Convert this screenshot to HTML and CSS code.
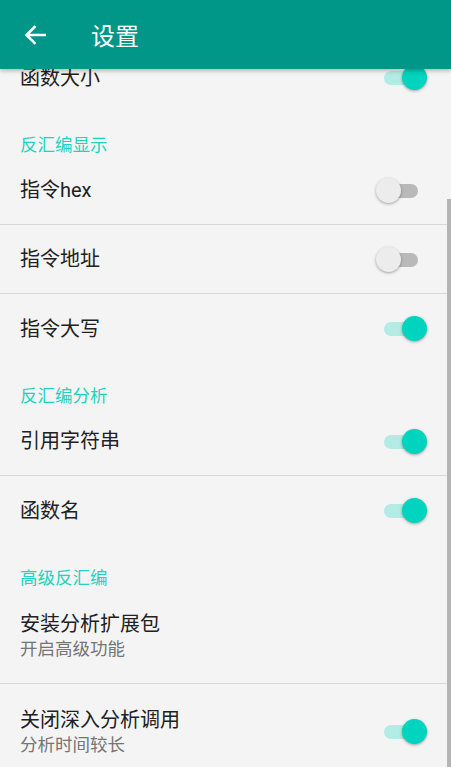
FILE: index.html
```html
<!DOCTYPE html>
<html lang="zh-CN">
<head>
    <meta charset="UTF-8">
    <meta name="viewport" content="width=device-width, initial-scale=1.0">
    <title>设置</title>
    <link rel="stylesheet" href="styles.css">
</head>
<body>

<div class="toolbar">
    <svg class="back" width="22" height="20" viewBox="0 0 22 20">
        <path d="M21 10H3M10.5 2L2.5 10l8 8" fill="none" stroke="#fff" stroke-width="2.6" stroke-linecap="square"/>
    </svg>
    <span class="title">设置</span>
</div>

<div class="list">
    <div class="pref">
        <span class="pref-title">函数大小</span>
        <span class="switch on"></span>
    </div>

    <div class="category">反汇编显示</div>
    <div class="pref divided">
        <span class="pref-title">指令hex</span>
        <span class="switch"></span>
    </div>
    <div class="pref divided">
        <span class="pref-title">指令地址</span>
        <span class="switch"></span>
    </div>
    <div class="pref">
        <span class="pref-title">指令大写</span>
        <span class="switch on"></span>
    </div>

    <div class="category">反汇编分析</div>
    <div class="pref divided">
        <span class="pref-title">引用字符串</span>
        <span class="switch on"></span>
    </div>
    <div class="pref">
        <span class="pref-title">函数名</span>
        <span class="switch on"></span>
    </div>

    <div class="category">高级反汇编</div>
    <div class="pref tall divided">
        <div class="pref-text">
            <span class="pref-title">安装分析扩展包</span>
            <span class="pref-summary">开启高级功能</span>
        </div>
    </div>
    <div class="pref tall">
        <div class="pref-text">
            <span class="pref-title">关闭深入分析调用</span>
            <span class="pref-summary">分析时间较长</span>
        </div>
        <span class="switch on"></span>
    </div>
</div>

<div class="scrollbar"></div>

</body>
</html>
```

FILE: styles.css
```css
* {
    box-sizing: border-box;
    margin: 0;
    padding: 0;
}

body {
    font-family: Roboto, 'Noto Sans CJK SC', sans-serif;
    background: #f4f4f4;
    color: #212121;
    height: 100vh;
    overflow: hidden; /* screenshot of a scrolled list */
}

.toolbar {
    position: relative;
    z-index: 2;
    display: flex;
    align-items: center;
    height: 69px;
    padding-left: 24px;
    background: #009688;
    box-shadow: 0 2px 4px rgba(0, 0, 0, 0.25);
}

.back {
    display: block;
    margin-top: 1px;
}

.title {
    margin-left: 45px;
    font-size: 24px;
    color: #fff;
}

/* list is scrolled a bit, first row sits under the toolbar */
.list {
    margin-top: -26px;
}

.pref {
    display: flex;
    align-items: center;
    justify-content: space-between;
    height: 69px;
    padding: 0 24px 0 20px;
}

.pref.tall {
    height: 95px;
}

.pref.divided {
    border-bottom: 1px solid #d8d8d8;
}

.pref-title {
    font-size: 20px;
    line-height: 26px;
}

.pref-text {
    display: flex;
    flex-direction: column;
}

.pref-summary {
    font-size: 17.5px;
    line-height: 24px;
    color: #757575;
}

.category {
    height: 44px;
    padding: 22px 0 0 20px;
    font-size: 17.5px;
    line-height: 22px;
    color: #1fd3bf;
}

.switch {
    position: relative;
    width: 51px;
    height: 25px;
    flex-shrink: 0;
}

.switch::before {
    content: '';
    position: absolute;
    left: 8px;
    top: 6px;
    width: 34px;
    height: 14px;
    border-radius: 7px;
    background: #b9b9b9;
}

.switch::after {
    content: '';
    position: absolute;
    left: 0;
    top: 0;
    width: 25px;
    height: 25px;
    border-radius: 50%;
    background: #ececec;
    box-shadow: 0 1px 3px rgba(0, 0, 0, 0.35);
}

.switch.on::before {
    background: #b2ece5;
}

.switch.on::after {
    left: 26px;
    background: #00d3be;
}

.scrollbar {
    position: fixed;
    right: 0;
    top: 199px;
    bottom: 0;
    width: 4px;
    background: #b4b4b4;
}
```
